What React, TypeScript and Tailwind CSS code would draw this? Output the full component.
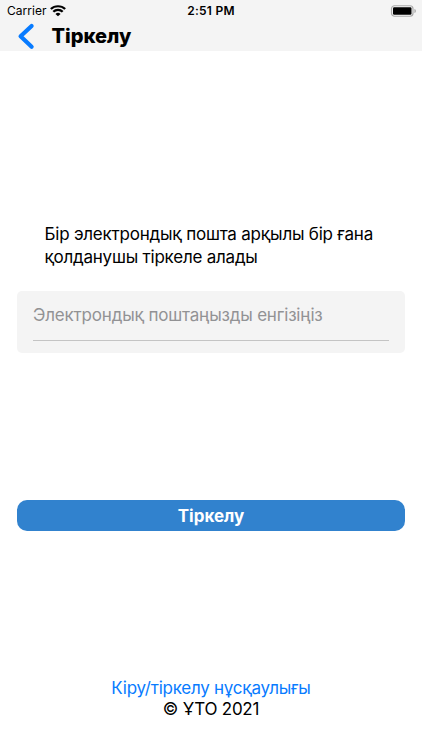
function StatusBar() {
  return (
    <div className="grid h-[22px] grid-cols-3 items-center pl-[7px] pr-[6px] text-[12px] leading-[22px]">
      <div className="flex items-center gap-[4px]">
        <span className="tracking-[0.02px]">Carrier</span>
        <svg width="16" height="12" viewBox="0 0 15 12" preserveAspectRatio="none" aria-label="Wi-Fi">
          <g fill="none" stroke="#000" strokeWidth="2.1">
            <path d="M0.8 4a9.4 9.4 0 0 1 13.4 0" />
            <path d="M3.1 6.8a6.1 6.1 0 0 1 8.8 0" />
          </g>
          <path d="M5.1 8.9a3.4 3.4 0 0 1 4.8 0L7.5 11.3Z" />
        </svg>
      </div>
      <span className="-ml-px text-center font-semibold tracking-[0.25px]">2:51 PM</span>
      <svg className="justify-self-end" width="26" height="12" viewBox="0 0 26 12" aria-label="Battery">
        <rect x="1.5" y="0.75" width="21.5" height="10.5" rx="3" fill="none" stroke="#aaa" strokeWidth="1.2" />
        <rect x="3" y="2.2" width="18.5" height="7.6" rx="1.2" />
        <path d="M24.5 4v4c1.7-.7 1.7-3.3 0-4Z" fill="#999" />
      </svg>
    </div>
  );
}

function Header() {
  return (
    <header className="h-[51px] bg-[#f4f4f4]">
      <StatusBar />
      <div className="flex h-[27px] items-center pl-[17px]">
        <svg width="18" height="28" viewBox="0 0 18 28" aria-label="Back">
          <path d="M14.6 4 3.6 14.3l11 10.4" fill="none" stroke="#087bff" strokeWidth="4.2" strokeLinecap="round" strokeLinejoin="round" />
        </svg>
        <h1 className="pl-[16.5px] text-[20px] font-extrabold leading-7">Тіркелу</h1>
      </div>
    </header>
  );
}

export default function App() {
  return (
    <main className="flex h-[750px] w-[422px] flex-col overflow-hidden bg-white font-['Inter','Liberation_Sans',sans-serif] text-black">
      <Header />
      <p className="mt-[172px] ml-[44.5px] h-[45px] whitespace-nowrap text-[17px] leading-[22.5px] tracking-[-0.22px]">
        Бір электрондық пошта арқылы бір ғана
        <br />
        қолданушы тіркеле алады
      </p>
      <div className="mx-[17px] mt-[23px] h-[62px] rounded-[5px] bg-[#f4f4f4] px-4">
        <input
          className="block h-[50px] w-full border-b border-[#c4c4c4] bg-transparent pb-[2px] text-[17px] tracking-[-0.19px] outline-none placeholder:text-[#929294]"
          placeholder="Электрондық поштаңызды енгізіңіз"
        />
      </div>
      <button className="mx-[17px] mt-[147px] h-[31px] rounded-[10px] bg-[#3182ce] pt-px text-[17px] font-bold leading-[30px] text-white">
        Тіркелу
      </button>
      <footer className="mt-[147px] flex flex-col items-center text-[17px] leading-[21px] tracking-[-0.25px]">
        <a className="text-[#087bff]">Кіру/тіркелу нұсқаулығы</a>
        <span>© ҰТО 2021</span>
      </footer>
    </main>
  );
}
